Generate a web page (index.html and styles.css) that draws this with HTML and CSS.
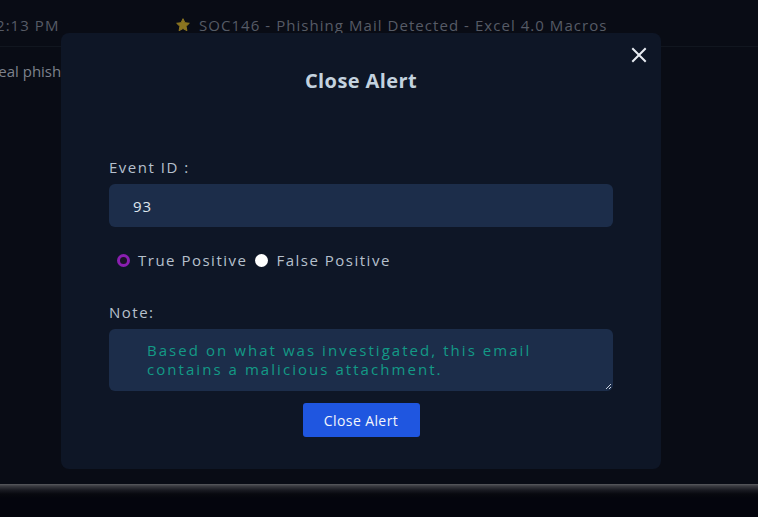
FILE: index.html
```html
<!DOCTYPE html>
<html lang="en">
<head>
<meta charset="utf-8">
<title>Close Alert</title>
<link rel="stylesheet" href="styles.css">
</head>
<body>
<div class="page">
  <div class="alert-row">
    <span class="time">2:13 PM</span>
    <span class="alert-name">
      <svg class="star" viewBox="0 0 24 24" width="16" height="16"><path d="M12 2.5l2.9 6.1 6.6.8-4.9 4.6 1.3 6.6L12 17.3l-5.9 3.3 1.3-6.6-4.9-4.6 6.6-.8z" fill="#8a7420" stroke="#8a7420" stroke-width="1.5" stroke-linejoin="round"/></svg>
      SOC146 - Phishing Mail Detected - Excel 4.0 Macros
    </span>
  </div>
  <div class="desc-row"><span class="desc">Real phishing</span></div>
  <div class="spacer"></div>
  <div class="bottom-bar"></div>

  <div class="modal">
    <button class="close-x" aria-label="Close">
      <svg viewBox="0 0 16 16" width="16" height="16"><path d="M2 2L14 14M14 2L2 14" stroke="#e8ecf2" stroke-width="2" stroke-linecap="square"/></svg>
    </button>
    <h2 class="title">Close Alert</h2>
    <label class="label label-id">Event ID :</label>
    <div class="input">93</div>
    <div class="radios">
      <span class="radio checked"></span><span class="radio-label">True Positive</span>
      <span class="radio"></span><span class="radio-label">False Positive</span>
    </div>
    <label class="label label-note">Note:</label>
    <div class="textarea">
      <p>Based on what was investigated, this email<br>contains a malicious attachment.</p>
      <svg class="grip" viewBox="0 0 8 8" width="8" height="8"><path d="M7 2L2 7M7 5L5 7" stroke="#c8d0dc" stroke-width="1"/></svg>
    </div>
    <div class="actions"><button class="btn">Close Alert</button></div>
  </div>
</div>
</body>
</html>
```
FILE: styles.css
```css
* { box-sizing: border-box; }
html, body { margin: 0; padding: 0; }
body {
  width: 758px;
  height: 517px;
  overflow: hidden;
  background: #04050d;
  font-family: "Open Sans", "Noto Sans", sans-serif;
}
.page {
  position: relative;
  width: 758px;
  height: 517px;
  display: flex;
  flex-direction: column;
  background: #090c15;
}
.alert-row {
  height: 47px;
  display: flex;
  align-items: center;
  border-bottom: 1px solid #11161f;
  color: #565b66;
  font-size: 15px;
  letter-spacing: 1.05px;
  padding-top: 3px;
}
.time { margin-left: -4px; width: 179px; }
.alert-name { display: flex; align-items: center; gap: 8px; }
.star { display: block; }
.desc-row {
  height: 50px;
  display: flex;
  align-items: center;
  padding-bottom: 2px;
  color: #7d828c;
  font-size: 15px;
}
.desc { margin-left: -11px; }
.spacer { flex: 1; }
.bottom-bar {
  height: 33px;
  background: linear-gradient(#5a5b5f 0px, #3a3b40 2px, #1a1b22 6px, #08090f 10px, #04050d 14px);
}
.modal {
  position: absolute;
  left: 61px;
  top: 33px;
  width: 600px;
  height: 436px;
  background: #0e1626;
  border-radius: 8px;
  padding: 0 48px;
  display: flex;
  flex-direction: column;
}
.close-x {
  position: absolute;
  right: 14px;
  top: 14px;
  background: none;
  border: 0;
  padding: 0;
  width: 16px;
  height: 16px;
}
.close-x svg { display: block; }
.title {
  margin: 36px 0 0;
  text-align: center;
  font-size: 20px;
  line-height: 24px;
  font-weight: 700;
  color: #c3d2df;
  letter-spacing: 0.4px;
}
.label {
  display: block;
  color: #b6c0cd;
  font-size: 15px;
  line-height: 20px;
  letter-spacing: 1.5px;
}
.label-id { margin-top: 64px; }
.input {
  margin-top: 7px;
  height: 43px;
  background: #1c2d4a;
  border-radius: 6px;
  padding-left: 24px;
  display: flex;
  align-items: center;
  color: #dfe6ee;
  font-size: 15px;
  letter-spacing: 1px;
}
.radios {
  margin-top: 23px;
  height: 20px;
  display: flex;
  align-items: center;
  padding-left: 8px;
  color: #b6c0cd;
  font-size: 15px;
  letter-spacing: 1.5px;
}
.radio {
  width: 13px;
  height: 13px;
  border-radius: 50%;
  background: #ffffff;
  margin-right: 8px;
}
.radio.checked {
  background: #1a1226;
  border: 3px solid #8a1fb0;
}
.radio-label { margin-right: 8px; }
.label-note { margin-top: 32px; }
.textarea {
  position: relative;
  margin-top: 7px;
  height: 62px;
  background: #1c2d4a;
  border-radius: 6px;
  padding: 12px 0 0 38px;
}
.textarea p {
  margin: 0;
  color: #139a86;
  font-size: 15px;
  line-height: 19px;
  letter-spacing: 2.05px;
}
.grip { position: absolute; right: 1px; bottom: 1px; }
.actions {
  margin-top: 12px;
  display: flex;
  justify-content: center;
}
.btn {
  width: 117px;
  height: 34px;
  background: #1f56e0;
  border: 0;
  border-radius: 3px;
  color: #f2f5fb;
  font-family: "Open Sans", "Noto Sans", sans-serif;
  font-size: 14px;
  letter-spacing: 0.4px;
}
```
